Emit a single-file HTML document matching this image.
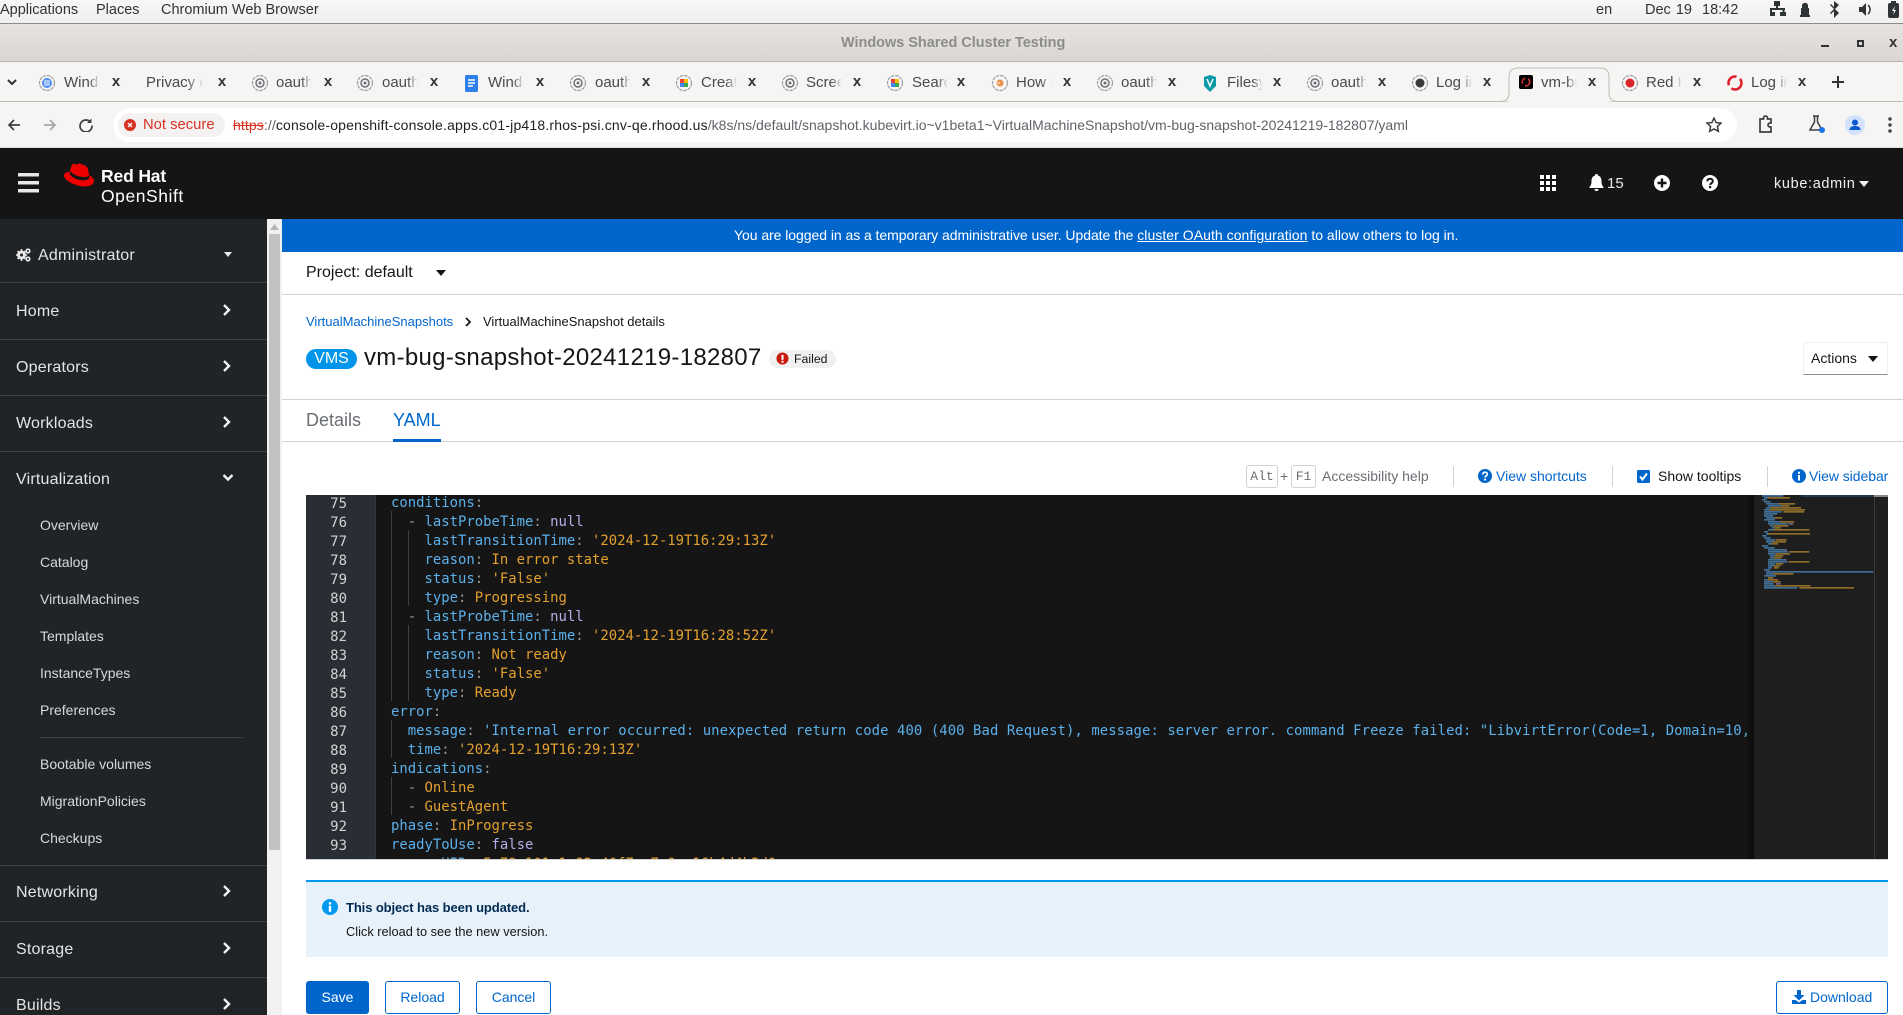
<!DOCTYPE html>
<html><head><meta charset="utf-8"><title>vm-bug-snapshot</title>
<style>
html,body{margin:0;padding:0;background:#fff}
#p{position:relative;width:1903px;height:1015px;overflow:hidden;font-family:"Liberation Sans",sans-serif;color:#151515;background:#fff}
.a{position:absolute}
.t{position:absolute;white-space:nowrap;line-height:20px}
svg{position:absolute;display:block}
.side{color:#e4e4e4;font-size:16px;letter-spacing:.2px;margin-top:1px}
.sub{color:#d8d8d8;font-size:14px}
.sep{position:absolute;left:0;width:267px;height:1px;background:#3c3f42}
.tab{position:absolute;top:73px;height:20px;line-height:20px;font-size:15px;color:#4a4a4a;white-space:nowrap;overflow:hidden;width:36px;-webkit-mask-image:linear-gradient(90deg,#000 70%,transparent 100%);mask-image:linear-gradient(90deg,#000 70%,transparent 100%)}
.x{position:absolute;top:72px;font-size:15px;line-height:20px;color:#333;width:12px;text-align:center;font-weight:bold}
.mono{font-family:"DejaVu Sans Mono","Liberation Mono",monospace;font-size:13.92px;line-height:19px;white-space:pre}
.k{color:#5bb0ea}.s{color:#e3a02f}.n{color:#b6aee6}.d{color:#9a9a9a}
.g{position:absolute;width:1px;background:#3f3f3f}
.ln{position:absolute;left:306px;width:41px;text-align:right;color:#d2d2d2;font-family:"DejaVu Sans Mono",monospace;font-size:14px;line-height:19px;margin-top:1px}
.btn{position:absolute;top:981px;height:31px;border:1px solid #06c;border-radius:3px;color:#06c;font-size:14px;line-height:31px;text-align:center;box-sizing:content-box;background:#fff}
.vs{position:absolute;width:1px;top:466px;height:21px;background:#d2d2d2}
.key{position:absolute;top:465px;height:21px;border:1px solid #d2d2d2;border-radius:3px;font-family:"Liberation Mono",monospace;font-size:13px;line-height:21px;text-align:center;color:#6a6e73;box-sizing:content-box}
</style></head><body><div id="p">

<!-- GNOME top bar -->
<div class="a" style="left:0;top:0;width:1903px;height:24px;background:linear-gradient(#f8f7f6,#f1efed);border-bottom:1px solid #8b8b8b;box-sizing:border-box"></div>
<div class="t" style="left:0;top:0;font-size:14.5px;color:#2e3436">Applications</div>
<div class="t" style="left:96px;top:0;font-size:14.5px;color:#2e3436">Places</div>
<div class="t" style="left:161px;top:0;font-size:14.5px;color:#2e3436">Chromium Web Browser</div>
<div class="t" style="left:1596px;top:0;font-size:14.5px;color:#2e3436">en</div>
<div class="t" style="left:1645px;top:0;font-size:14.5px;color:#2e3436;word-spacing:1px">Dec 19&nbsp; 18:42</div>
<svg style="left:1770px;top:0" width="133" height="20" viewBox="0 0 133 20" fill="#2e3436">
<rect x="4" y="1" width="6" height="5"/><rect x="6" y="6" width="2" height="3"/><rect x="0" y="8" width="15" height="2"/><rect x="0" y="10" width="2" height="3"/><rect x="12.500" y="10" width="2" height="3"/><rect x="-1" y="12" width="6" height="4"/><rect x="10" y="12" width="6" height="4"/>
<path d="M32 8V5a3.200 3.200 0 0 1 6 0v3h1v7h-8V8z"/><rect x="30" y="15" width="10" height="2"/>
<path d="M64 1l5 4-4 4 4 4-5 5V11l-3 3-1-1 4-4-4-4 1-1 3 3z"/>
<path d="M89 7h3l4-4v13l-4-4h-3z"/><path d="M98 5a6 6 0 0 1 0 9" fill="none" stroke="#2e3436" stroke-width="1.500"/>
<rect x="118" y="3" width="11" height="15" rx="2"/><rect x="121" y="1" width="5" height="2"/><path d="M125 6l-3 5h2l-1 4 3-5h-2z" fill="#f4f3f2"/>
</svg>

<!-- Title bar -->
<div class="a" style="left:0;top:24px;width:1903px;height:38px;background:linear-gradient(#e6e3e0,#dad7d3);border-bottom:1px solid #b9b5b0;box-sizing:border-box"></div>
<div class="t" style="left:841px;top:33px;font-size:14.5px;font-weight:bold;color:#8c8c8a;letter-spacing:-.03px">Windows Shared Cluster Testing</div>
<div class="a" style="left:1821px;top:45px;width:8px;height:2px;background:#333"></div>
<div class="a" style="left:1857px;top:40px;width:7px;height:7px;border:2px solid #333;box-sizing:border-box"></div>
<div class="t" style="left:1889px;top:33px;font-size:15px;font-weight:bold;color:#333">x</div>

<!-- Tab strip -->
<div class="a" style="left:0;top:62px;width:1903px;height:40px;background:#f6f5f3;border-bottom:1px solid #bdbbb8;box-sizing:border-box"></div>
<svg style="left:6px;top:76px" width="12" height="12" fill="none" stroke="#333" stroke-width="2"><path d="M2 4l4 4 4-4"/></svg>

<svg style="left:0;top:62px" width="1903" height="40" viewBox="0 0 1903 40">
<g fill="none" stroke="#9aa0a6" stroke-width="1.200" stroke-dasharray="3.500 .9">
<circle cx="260" cy="21" r="7.500"/><circle cx="365" cy="21" r="7.500"/><circle cx="578" cy="21" r="7.500"/><circle cx="790" cy="21" r="7.500"/><circle cx="1105" cy="21" r="7.500"/><circle cx="1315" cy="21" r="7.500"/>
<circle cx="684" cy="21" r="7.500"/><circle cx="895" cy="21" r="7.500"/><circle cx="1000" cy="21" r="7.500"/><circle cx="1420" cy="21" r="7.500"/><circle cx="1630" cy="21" r="7.500"/><circle cx="47" cy="21" r="7.500"/>
</g>
<g fill="none" stroke="#6d7278" stroke-width="1.500"><circle cx="260" cy="21" r="4"/><circle cx="365" cy="21" r="4"/><circle cx="578" cy="21" r="4"/><circle cx="790" cy="21" r="4"/><circle cx="1105" cy="21" r="4"/><circle cx="1315" cy="21" r="4"/></g>
<g fill="#6d7278"><circle cx="260" cy="21" r="1.500"/><circle cx="365" cy="21" r="1.500"/><circle cx="578" cy="21" r="1.500"/><circle cx="790" cy="21" r="1.500"/><circle cx="1105" cy="21" r="1.500"/><circle cx="1315" cy="21" r="1.500"/></g>
<circle cx="47" cy="21" r="5" fill="#4c8bf5"/><path d="M44 19h6M44 21h6M44 23h6" stroke="#fff"/>
<rect x="465" y="13" width="13" height="17" rx="1.500" fill="#2f80ed"/><path d="M468 18h7M468 21h7M468 24h5" stroke="#fff" stroke-width="1.500"/>
<path d="M680 21v-4h4v4z" fill="#ea4335"/><path d="M684 21v-4h4v4z" fill="#fbbc04"/><path d="M680 21h4v4h-4z" fill="#4285f4"/><path d="M684 21h4v4h-4z" fill="#34a853"/>
<path d="M891 21v-4h4v4z" fill="#ea4335"/><path d="M895 21v-4h4v4z" fill="#fbbc04"/><path d="M891 21h4v4h-4z" fill="#4285f4"/><path d="M895 21h4v4h-4z" fill="#34a853"/>
<circle cx="1000" cy="21" r="3.500" fill="#e8914c"/><path d="M997 21h3" stroke="#fff"/>
<path d="M1204 15l6-2 6 2 0 9-6 6-6-6z" fill="#0d9aa8"/><path d="M1207 17l3 7 3-7" stroke="#fff" fill="none" stroke-width="1.500"/>
<circle cx="1420" cy="21" r="4.500" fill="#3a3a3a"/>
<circle cx="1630" cy="21" r="4.500" fill="#d8262c"/>
<circle cx="1735" cy="21" r="6.500" fill="none" stroke="#e01f2c" stroke-width="2.500" stroke-dasharray="14 4"/>
</svg>

<!-- active tab -->
<svg style="left:1500px;top:62px" width="120" height="40" viewBox="0 0 120 40"><path d="M0 39.500c6 0 9-3 9-9V15c0-6 3-9 9-9h82c6 0 9 3 9 9v15.500c0 6 3 9 9 9" fill="#f6f5f3" stroke="#bdbbb8"/><rect x="9.500" y="37" width="99" height="4" fill="#f6f5f3"/></svg>
<div class="a" style="left:1519px;top:75px;width:14px;height:14px;background:#000;border-radius:2px"></div>
<svg style="left:1519px;top:75px" width="14" height="14"><circle cx="7" cy="7" r="3.800" fill="none" stroke="#d33" stroke-width="1.500" stroke-dasharray="7 3"/></svg>

<div class="tab" style="left:64px">Windows</div><div class="x" style="left:110px">x</div>
<div class="tab" style="left:146px;width:58px">Privacy error</div><div class="x" style="left:216px">x</div>
<div class="tab" style="left:276px">oauth</div><div class="x" style="left:322px">x</div>
<div class="tab" style="left:382px">oauth</div><div class="x" style="left:428px">x</div>
<div class="tab" style="left:488px">Windows</div><div class="x" style="left:534px">x</div>
<div class="tab" style="left:595px">oauth</div><div class="x" style="left:640px">x</div>
<div class="tab" style="left:701px">Create</div><div class="x" style="left:746px">x</div>
<div class="tab" style="left:806px">Screen</div><div class="x" style="left:851px">x</div>
<div class="tab" style="left:912px">Search</div><div class="x" style="left:955px">x</div>
<div class="tab" style="left:1016px">How to</div><div class="x" style="left:1061px">x</div>
<div class="tab" style="left:1121px">oauth</div><div class="x" style="left:1166px">x</div>
<div class="tab" style="left:1227px">Filesystem</div><div class="x" style="left:1271px">x</div>
<div class="tab" style="left:1331px">oauth</div><div class="x" style="left:1376px">x</div>
<div class="tab" style="left:1436px">Log in</div><div class="x" style="left:1481px">x</div>
<div class="tab" style="left:1541px">vm-bug</div><div class="x" style="left:1586px">x</div>
<div class="tab" style="left:1646px">Red Hat</div><div class="x" style="left:1691px">x</div>
<div class="tab" style="left:1751px">Log in</div><div class="x" style="left:1796px">x</div>
<svg style="left:1832px;top:76px" width="12" height="12" stroke="#333" stroke-width="2"><path d="M6 0v12M0 6h12"/></svg>

<!-- Address bar -->
<div class="a" style="left:0;top:102px;width:1903px;height:46px;background:#f6f5f3;border-bottom:1px solid #e6dfd8;box-sizing:border-box"></div>
<svg style="left:7px;top:118px" width="14" height="14" fill="none" stroke="#3c4043" stroke-width="1.700"><path d="M13 7H2M7 2L2 7l5 5"/></svg>
<svg style="left:43px;top:118px" width="14" height="14" fill="none" stroke="#a4a6a8" stroke-width="1.700"><path d="M1 7h11M7 2l5 5-5 5"/></svg>
<svg style="left:79px;top:118px" width="14" height="14" fill="none" stroke="#3c4043" stroke-width="1.700"><path d="M11.500 4A6 6 0 1 0 13 7.500"/><path d="M12.500 0.500V5H8" fill="#3c4043" stroke="none"/></svg>
<div class="a" style="left:113px;top:108px;width:1624px;height:34px;background:#fff;border-radius:17px"></div>
<div class="a" style="left:118px;top:113px;width:107px;height:24px;background:#f3f2f0;border-radius:12px"></div>
<svg style="left:124px;top:119px" width="12" height="12"><circle cx="6" cy="6" r="6" fill="#d93025"/><path d="M4 4l4 4M8 4l-4 4" stroke="#fff" stroke-width="1.300"/></svg>
<div class="t" style="left:143px;top:115px;font-size:14.8px;color:#d93025">Not secure</div>
<div class="t" style="left:233px;top:115px;font-size:14px;color:#5f6368"><span style="color:#d93025;text-decoration:line-through;letter-spacing:.1px">https</span><span style="letter-spacing:.1px">://</span><span style="color:#202124;letter-spacing:.18px">console-openshift-console.apps.c01-jp418.rhos-psi.cnv-qe.rhood.us</span>/k8s/ns/default/snapshot.kubevirt.io~v1beta1~VirtualMachineSnapshot/vm-bug-snapshot-20241219-182807/yaml</div>
<svg style="left:1706px;top:117px" width="16" height="16" fill="none" stroke="#3c4043" stroke-width="1.500"><path d="M8 1l2.100 4.600 5 .5-3.700 3.300 1 4.900L8 12l-4.400 2.300 1-4.900L.900 6.100l5-.5z"/></svg>
<svg style="left:1757px;top:115px" width="17" height="18" fill="none" stroke="#3c4043" stroke-width="1.700"><path d="M3 4h3.500V3a2 2 0 0 1 4 0v1H14v4h-1a2 2 0 0 0 0 4h1v5H3z"/></svg>
<svg style="left:1808px;top:115px" width="18" height="18" fill="none" stroke="#3c4043" stroke-width="1.500"><path d="M5 1h6M6.500 1v6L2 15h12L9.500 7V1"/><circle cx="14" cy="15" r="3" fill="#1a73e8" stroke="none"/></svg>
<svg style="left:1845px;top:115px" width="20" height="20"><circle cx="10" cy="10" r="10" fill="#d3e3fd"/><circle cx="10" cy="7.500" r="3" fill="#0b57d0"/><path d="M4.500 15c0-3 2.500-4 5.500-4s5.500 1 5.500 4z" fill="#0b57d0"/></svg>
<svg style="left:1888px;top:117px" width="4" height="16" fill="#3c4043"><circle cx="2" cy="2" r="1.700"/><circle cx="2" cy="8" r="1.700"/><circle cx="2" cy="14" r="1.700"/></svg>

<!-- Masthead -->
<div class="a" style="left:0;top:148px;width:1903px;height:71px;background:#151515"></div>
<svg style="left:18px;top:173px" width="22" height="20" fill="#e8e8e8"><rect y="0" width="21" height="3.500" rx=".5"/><rect y="8" width="21" height="3.500" rx=".5"/><rect y="16" width="21" height="3.500" rx=".5"/></svg>
<svg style="left:63px;top:163px" width="33" height="25" viewBox="0 0 33 25"><path fill="#e00" d="M21 14c2 0 5-.3 5-2.800 0-.2 0-.4-.1-.6l-1.200-5.200C24.400 4.300 24.100 3.700 22 2.600 20.400 1.800 16.900.5 15.900.5c-1 0-1.200 1.200-2.300 1.200-1.100 0-1.900-.9-2.900-.9-1 0-1.600.7-2.100 2 0 0-1.300 3.800-1.500 4.300v.3C7.100 9.100 13 14 21 14zm5.200-1.800c.3 1.300.3 1.400.3 1.600 0 2.200-2.500 3.500-5.800 3.500C13.300 17.300 6.800 13 6.800 10.100c0-.4.100-.8.300-1.200C4.400 9 1 9.500 1 12.500 1 17.400 12.700 23.500 22 23.500c7.100 0 8.900-3.200 8.900-5.700 0-2-1.700-4.200-4.700-5.600z"/></svg>
<div class="t" style="left:101px;top:166px;font-size:17.500px;font-weight:bold;color:#fff;letter-spacing:-.15px">Red Hat</div>
<div class="t" style="left:101px;top:186px;font-size:17.500px;color:#fff;letter-spacing:.55px">OpenShift</div>
<svg style="left:1540px;top:175px" width="16" height="16" fill="#fff"><rect width="4" height="4"/><rect x="6" width="4" height="4"/><rect x="12" width="4" height="4"/><rect y="6" width="4" height="4"/><rect x="6" y="6" width="4" height="4"/><rect x="12" y="6" width="4" height="4"/><rect y="12" width="4" height="4"/><rect x="6" y="12" width="4" height="4"/><rect x="12" y="12" width="4" height="4"/></svg>
<svg style="left:1589px;top:174px" width="15" height="18" fill="#fff"><path d="M7.500 0c1 0 1.500.6 1.500 1.500C11.500 2.200 12.500 4.500 12.500 7c0 3 .6 4.700 2 6v1H.500v-1c1.400-1.300 2-3 2-6 0-2.500 1-4.800 3.500-5.500C6 .6 6.500 0 7.500 0z"/><path d="M5.500 15h4a2 2 0 0 1-4 0z"/></svg>
<div class="t" style="left:1607px;top:174px;font-size:15px;color:#e8e8e8">15</div>
<svg style="left:1654px;top:175px" width="16" height="16"><circle cx="8" cy="8" r="8" fill="#fff"/><path d="M8 3.500v9M3.500 8h9" stroke="#151515" stroke-width="2.400"/></svg>
<svg style="left:1702px;top:175px" width="16" height="16"><circle cx="8" cy="8" r="8" fill="#fff"/><path d="M5.300 6.300C5.400 4.500 6.600 3.700 8 3.700c1.600 0 2.800 1 2.800 2.400 0 2-2.600 2.100-2.700 3.900" fill="none" stroke="#151515" stroke-width="2"/><rect x="7" y="11" width="2.200" height="2.200" fill="#151515"/></svg>
<div class="t" style="left:1774px;top:174px;font-size:14.500px;color:#f0f0f0;letter-spacing:.65px">kube:admin</div>
<svg style="left:1859px;top:181px" width="10" height="6" fill="#f0f0f0"><path d="M0 0h10L5 6z"/></svg>

<!-- Sidebar -->
<div class="a" style="left:0;top:219px;width:267px;height:796px;background:#212427"></div>
<div class="a" style="left:267px;top:219px;width:15px;height:796px;background:#f1f1f1"></div>
<div class="a" style="left:269px;top:234px;width:11px;height:616px;background:#c1c1c1"></div>
<svg style="left:270px;top:224px" width="9" height="6" fill="#b5b5b5"><path d="M4.500 0L9 6H0z"/></svg>

<svg style="left:16px;top:248px" width="15" height="14" fill="#e8e8e8"><circle cx="5.500" cy="7" r="4.500" fill="#e8e8e8"/><path d="M5.500 1v12M0 7h11M1.600 3.100l7.800 7.800M9.400 3.100l-7.800 7.800" stroke="#e8e8e8" stroke-width="1.600"/><circle cx="5.500" cy="7" r="1.500" fill="#212427"/><circle cx="12" cy="3" r="1.800" fill="none" stroke="#e8e8e8" stroke-width="1.600"/><circle cx="12" cy="11" r="1.800" fill="none" stroke="#e8e8e8" stroke-width="1.600"/></svg>
<div class="t side" style="left:38px;top:245px">Administrator</div>
<svg style="left:224px;top:252px" width="8" height="5" fill="#e8e8e8"><path d="M0 0h8L4 5z"/></svg>
<div class="sep" style="top:282px"></div>
<div class="t side" style="left:16px;top:301px">Home</div>
<div class="sep" style="top:339px"></div>
<div class="t side" style="left:16px;top:357px">Operators</div>
<div class="sep" style="top:395px"></div>
<div class="t side" style="left:16px;top:413px">Workloads</div>
<div class="sep" style="top:451px"></div>
<div class="t side" style="left:16px;top:469px">Virtualization</div>
<div class="t sub" style="left:40px;top:515px">Overview</div>
<div class="t sub" style="left:40px;top:552px">Catalog</div>
<div class="t sub" style="left:40px;top:589px">VirtualMachines</div>
<div class="t sub" style="left:40px;top:626px">Templates</div>
<div class="t sub" style="left:40px;top:663px">InstanceTypes</div>
<div class="t sub" style="left:40px;top:700px">Preferences</div>
<div class="a" style="left:40px;top:737px;width:203px;height:1px;background:#3c3f42"></div>
<div class="t sub" style="left:40px;top:754px">Bootable volumes</div>
<div class="t sub" style="left:40px;top:791px">MigrationPolicies</div>
<div class="t sub" style="left:40px;top:828px">Checkups</div>
<div class="sep" style="top:865px"></div>
<div class="t side" style="left:16px;top:882px">Networking</div>
<div class="sep" style="top:921px"></div>
<div class="t side" style="left:16px;top:939px">Storage</div>
<div class="sep" style="top:977px"></div>
<div class="t side" style="left:16px;top:995px">Builds</div>
<svg style="left:0;top:219px" width="267" height="796" fill="none" stroke="#f0f0f0" stroke-width="2.400">
<path d="M224 86l5 5-5 5M224 142l5 5-5 5M224 198l5 5-5 5M224 667l5 5-5 5M224 724l5 5-5 5M224 780l5 5-5 5"/>
<path d="M223.500 256l4.500 4.500 4.500-4.500"/>
</svg>

<!-- Banner -->
<div class="a" style="left:282px;top:219px;width:1621px;height:33px;background:#06c"></div>
<div class="t" style="left:734px;top:225px;font-size:14px;color:#fff"><span style="letter-spacing:-.05px">You are logged in as a temporary administrative user. Update the </span><u style="letter-spacing:.05px">cluster OAuth configuration</u> to allow others to log in.</div>

<!-- Project bar -->
<div class="t" style="left:306px;top:263px;font-size:16px;color:#151515">Project: default</div>
<svg style="left:436px;top:270px" width="10" height="6" fill="#151515"><path d="M0 0h10L5 6z"/></svg>
<div class="a" style="left:282px;top:294px;width:1621px;height:1px;background:#d2d2d2"></div>

<!-- Heading -->
<div class="t" style="left:306px;top:312px;font-size:13px;color:#06c">VirtualMachineSnapshots</div>
<svg style="left:465px;top:317px" width="7" height="10" fill="none" stroke="#151515" stroke-width="1.800"><path d="M1 1l4 4-4 4"/></svg>
<div class="t" style="left:483px;top:312px;font-size:13px;color:#151515">VirtualMachineSnapshot details</div>
<div class="a" style="left:306px;top:349px;width:51px;height:20px;border-radius:10px;background:#0095e8;color:#fff;font-size:16px;line-height:20px;text-align:center">VMS</div>
<div class="t" style="left:364px;top:346px;font-size:24px;line-height:24px;color:#151515;letter-spacing:.3px">vm-bug-snapshot-20241219-182807</div>
<div class="a" style="left:769px;top:350px;width:67px;height:18px;border-radius:9px;background:#f0f0f0"></div>
<svg style="left:776px;top:352px" width="13" height="13"><circle cx="6.500" cy="6.500" r="6" fill="#c9190b"/><rect x="5.500" y="2.800" width="2" height="5" fill="#fff"/><rect x="5.500" y="8.800" width="2" height="2" fill="#fff"/></svg>
<div class="t" style="left:794px;top:349px;font-size:12.300px;color:#151515">Failed</div>
<div class="a" style="left:1803px;top:342px;width:85px;height:33px;border:1px solid #f0f0f0;border-bottom:1px solid #8a8d90;box-sizing:border-box"></div>
<div class="t" style="left:1811px;top:348px;font-size:14px;color:#151515">Actions</div>
<svg style="left:1868px;top:356px" width="10" height="6" fill="#151515"><path d="M0 0h10L5 6z"/></svg>

<!-- Tabs -->
<div class="a" style="left:282px;top:399px;width:1621px;height:1px;background:#d2d2d2"></div>
<div class="a" style="left:282px;top:441px;width:1621px;height:1px;background:#d2d2d2"></div>
<div class="t" style="left:306px;top:410px;font-size:18px;color:#6a6e73">Details</div>
<div class="t" style="left:393px;top:410px;font-size:18px;color:#06c">YAML</div>
<div class="a" style="left:393px;top:439px;width:48px;height:3px;background:#06c"></div>

<!-- Toolbar -->
<div class="key" style="left:1246px;width:30px">Alt</div>
<div class="t" style="left:1280px;top:466px;font-size:14px;color:#6a6e73">+</div>
<div class="key" style="left:1291px;width:23px">F1</div>
<div class="t" style="left:1322px;top:466px;font-size:14px;color:#6a6e73">Accessibility help</div>
<div class="vs" style="left:1453px"></div>
<svg style="left:1478px;top:469px" width="14" height="14"><circle cx="7" cy="7" r="7" fill="#06c"/><path d="M4.800 5.500C4.900 4 5.900 3.200 7 3.200c1.400 0 2.300.9 2.300 2 0 1.700-2.200 1.800-2.300 3.400" fill="none" stroke="#fff" stroke-width="1.700"/><rect x="6.100" y="9.600" width="1.900" height="1.900" fill="#fff"/></svg>
<div class="t" style="left:1496px;top:466px;font-size:14px;color:#06c">View shortcuts</div>
<div class="vs" style="left:1612px"></div>
<svg style="left:1637px;top:470px" width="13" height="13"><rect width="13" height="13" rx="1.500" fill="#06c"/><path d="M3 6.500l2.500 3L10 3.500" fill="none" stroke="#fff" stroke-width="2"/></svg>
<div class="t" style="left:1658px;top:466px;font-size:14px;color:#151515">Show tooltips</div>
<div class="vs" style="left:1767px"></div>
<svg style="left:1792px;top:469px" width="14" height="14"><circle cx="7" cy="7" r="7" fill="#06c"/><rect x="6" y="2.800" width="2" height="2" fill="#fff"/><rect x="6" y="6" width="2" height="5.500" fill="#fff"/></svg>
<div class="t" style="left:1809px;top:466px;font-size:14px;color:#06c;letter-spacing:-.05px">View sidebar</div>

<!-- Editor -->
<div class="a" style="left:306px;top:495px;width:1582px;height:364px;background:#151515;border-bottom:1px solid #d2d2d2;box-sizing:content-box;overflow:hidden">
</div>
<div class="a" style="left:306px;top:495px;width:69px;height:364px;background:#292e34"></div>
<div class="a" style="left:375px;top:495px;width:1px;height:364px;background:#33373c"></div>
<div id="nums" style="position:absolute;left:0;top:0">
<div class="ln" style="top:494px">75</div><div class="ln" style="top:513px">76</div><div class="ln" style="top:532px">77</div><div class="ln" style="top:551px">78</div><div class="ln" style="top:570px">79</div><div class="ln" style="top:589px">80</div><div class="ln" style="top:608px">81</div><div class="ln" style="top:627px">82</div><div class="ln" style="top:646px">83</div><div class="ln" style="top:665px">84</div><div class="ln" style="top:684px">85</div><div class="ln" style="top:703px">86</div><div class="ln" style="top:722px">87</div><div class="ln" style="top:741px">88</div><div class="ln" style="top:760px">89</div><div class="ln" style="top:779px">90</div><div class="ln" style="top:798px">91</div><div class="ln" style="top:817px">92</div><div class="ln" style="top:836px">93</div>
</div>
<div class="g" style="left:391px;top:511px;height:190px"></div>
<div class="g" style="left:408px;top:530px;height:76px"></div>
<div class="g" style="left:408px;top:625px;height:76px"></div>
<div class="g" style="left:391px;top:720px;height:38px"></div>
<div class="g" style="left:391px;top:777px;height:38px"></div>
<div class="a mono" style="left:391px;top:495px;width:1363px;height:364px;overflow:hidden"><div style="margin-top:-1px"><span class="k">conditions</span><span class="d">:</span>
  <span class="d">-</span> <span class="k">lastProbeTime</span><span class="d">:</span> <span class="n">null</span>
    <span class="k">lastTransitionTime</span><span class="d">:</span> <span class="s">'2024-12-19T16:29:13Z'</span>
    <span class="k">reason</span><span class="d">:</span> <span class="s">In error state</span>
    <span class="k">status</span><span class="d">:</span> <span class="s">'False'</span>
    <span class="k">type</span><span class="d">:</span> <span class="s">Progressing</span>
  <span class="d">-</span> <span class="k">lastProbeTime</span><span class="d">:</span> <span class="n">null</span>
    <span class="k">lastTransitionTime</span><span class="d">:</span> <span class="s">'2024-12-19T16:28:52Z'</span>
    <span class="k">reason</span><span class="d">:</span> <span class="s">Not ready</span>
    <span class="k">status</span><span class="d">:</span> <span class="s">'False'</span>
    <span class="k">type</span><span class="d">:</span> <span class="s">Ready</span>
<span class="k">error</span><span class="d">:</span>
  <span class="k">message</span><span class="d">:</span> <span class="k" style="letter-spacing:.075px">'Internal error occurred: unexpected return code 400 (400 Bad Request), message: server error. command Freeze failed: "LibvirtError(Code=1, Domain=10, Message=</span>
  <span class="k">time</span><span class="d">:</span> <span class="s">'2024-12-19T16:29:13Z'</span>
<span class="k">indications</span><span class="d">:</span>
  <span class="d">-</span> <span class="s">Online</span>
  <span class="d">-</span> <span class="s">GuestAgent</span>
<span class="k">phase</span><span class="d">:</span> <span class="s">InProgress</span>
<span class="k">readyToUse</span><span class="d">:</span> <span class="n">false</span>
<span class="k">sourceUID</span><span class="d">:</span> <span class="s">5c79a101-1c82-40f7-a7e0-c16b4d4b3d0</span></div></div>

<!-- Minimap -->
<div class="a" style="left:1744px;top:495px;width:10px;height:364px;background:linear-gradient(90deg,rgba(0,0,0,0),rgba(0,0,0,.45))"></div>
<div class="a" style="left:1754px;top:495px;width:120px;height:364px;background:#1e1e1e"></div>
<div class="a" style="left:1874px;top:495px;width:1px;height:364px;background:#3a3a3a"></div>
<div class="a" style="left:1875px;top:495px;width:13px;height:364px;background:#1e1e1e"></div>
<div class="a" style="left:1874px;top:495px;width:14px;height:2px;background:#8a8a8a"></div>
<svg style="left:1740px;top:490px" width="163" height="130" viewBox="0 0 489 390">
<rect x="185" y="15" width="217" height="6" fill="#1f3a52"/>
<g fill="#3f6f96" id="b">
<rect x="66" y="15" width="64" height="5"/><rect x="72" y="21" width="12" height="5"/><rect x="66" y="27" width="14" height="5"/><rect x="72" y="33" width="20" height="5"/><rect x="78" y="39" width="38" height="5"/><rect x="84" y="45" width="41" height="5"/><rect x="78" y="51" width="14" height="5"/><rect x="72" y="57" width="16" height="5"/><rect x="72" y="63" width="53" height="5"/><rect x="72" y="69" width="40" height="5"/><rect x="72" y="75" width="28" height="5"/><rect x="78" y="81" width="26" height="5"/><rect x="72" y="87" width="33" height="5"/><rect x="84" y="93" width="36" height="5"/><rect x="84" y="99" width="58" height="5"/><rect x="90" y="105" width="10" height="5"/><rect x="96" y="111" width="9" height="5"/><rect x="84" y="117" width="16" height="5"/><rect x="72" y="123" width="12" height="5"/><rect x="78" y="129" width="8" height="5"/><rect x="66" y="135" width="14" height="5"/><rect x="72" y="141" width="20" height="5"/><rect x="78" y="147" width="28" height="5"/><rect x="78" y="153" width="18" height="5"/><rect x="84" y="159" width="12" height="5"/><rect x="66" y="165" width="18" height="5"/><rect x="72" y="171" width="32" height="5"/><rect x="84" y="177" width="46" height="5"/><rect x="84" y="183" width="61" height="5"/><rect x="84" y="189" width="22" height="5"/><rect x="90" y="195" width="16" height="5"/><rect x="90" y="201" width="10" height="5"/><rect x="84" y="207" width="46" height="5"/><rect x="84" y="213" width="58" height="5"/><rect x="84" y="219" width="22" height="5"/><rect x="84" y="225" width="16" height="5"/><rect x="84" y="231" width="12" height="5"/><rect x="72" y="237" width="18" height="5"/><rect x="78" y="243" width="322" height="5"/><rect x="78" y="249" width="22" height="5"/><rect x="72" y="255" width="36" height="5"/><rect x="72" y="267" width="12" height="5"/><rect x="72" y="273" width="28" height="5"/><rect x="72" y="279" width="28" height="5"/><rect x="72" y="285" width="33" height="5"/><rect x="72" y="291" width="100" height="5"/>
</g>
<g fill="#8e6c2a">
<rect x="84" y="21" width="66" height="5"/><rect x="116" y="39" width="49" height="5"/><rect x="125" y="45" width="23" height="5"/><rect x="92" y="51" width="91" height="5"/><rect x="88" y="57" width="107" height="5"/><rect x="130" y="63" width="62" height="5"/><rect x="104" y="81" width="22" height="5"/><rect x="120" y="93" width="42" height="5"/><rect x="100" y="105" width="45" height="5"/><rect x="105" y="111" width="17" height="5"/><rect x="100" y="117" width="108" height="5"/><rect x="84" y="129" width="126" height="5"/><rect x="108" y="147" width="32" height="5"/><rect x="96" y="153" width="42" height="5"/><rect x="96" y="159" width="18" height="5"/><rect x="148" y="183" width="60" height="5"/><rect x="106" y="189" width="44" height="5"/><rect x="106" y="195" width="24" height="5"/><rect x="100" y="201" width="25" height="5"/><rect x="145" y="213" width="63" height="5"/><rect x="108" y="219" width="22" height="5"/><rect x="100" y="225" width="22" height="5"/><rect x="102" y="231" width="14" height="5"/><rect x="100" y="249" width="60" height="5"/><rect x="84" y="261" width="16" height="5"/><rect x="84" y="267" width="30" height="5"/><rect x="100" y="273" width="22" height="5"/><rect x="105" y="285" width="107" height="5"/><rect x="178" y="291" width="164" height="5"/>
</g>
<g fill="#6a6490"><rect x="145" y="99" width="15" height="5"/><rect x="130" y="177" width="10" height="5"/><rect x="130" y="207" width="10" height="5"/><rect x="108" y="279" width="14" height="5"/></g>
</svg>

<!-- Alert -->
<div class="a" style="left:306px;top:880px;width:1582px;height:77px;background:#e7f1fa;border-top:2px solid #0099ef;box-sizing:border-box"></div>
<svg style="left:322px;top:899px" width="16" height="16"><circle cx="8" cy="8" r="8" fill="#0099ef"/><rect x="6.800" y="3.200" width="2.400" height="2.400" fill="#fff"/><rect x="6.800" y="6.800" width="2.400" height="6" fill="#fff"/></svg>
<div class="t" style="left:346px;top:898px;font-size:13px;font-weight:bold;color:#002952;letter-spacing:-.1px">This object has been updated.</div>
<div class="t" style="left:346px;top:922px;font-size:12.800px;color:#151515">Click reload to see the new version.</div>

<!-- Buttons -->
<div class="btn" style="left:306px;width:61px;background:#06c;color:#fff">Save</div>
<div class="btn" style="left:385px;width:73px">Reload</div>
<div class="btn" style="left:476px;width:73px">Cancel</div>
<div class="btn" style="left:1776px;width:110px"></div>
<svg style="left:1792px;top:990px" width="14" height="14" fill="#06c"><path d="M5 0h4v5h3.500L7 10.500 1.500 5H5z"/><path d="M0 10h3.500L7 12.500 10.500 10H14v4H0z"/></svg>
<div class="t" style="left:1810px;top:987px;font-size:14px;color:#06c">Download</div>

</div></body></html>
